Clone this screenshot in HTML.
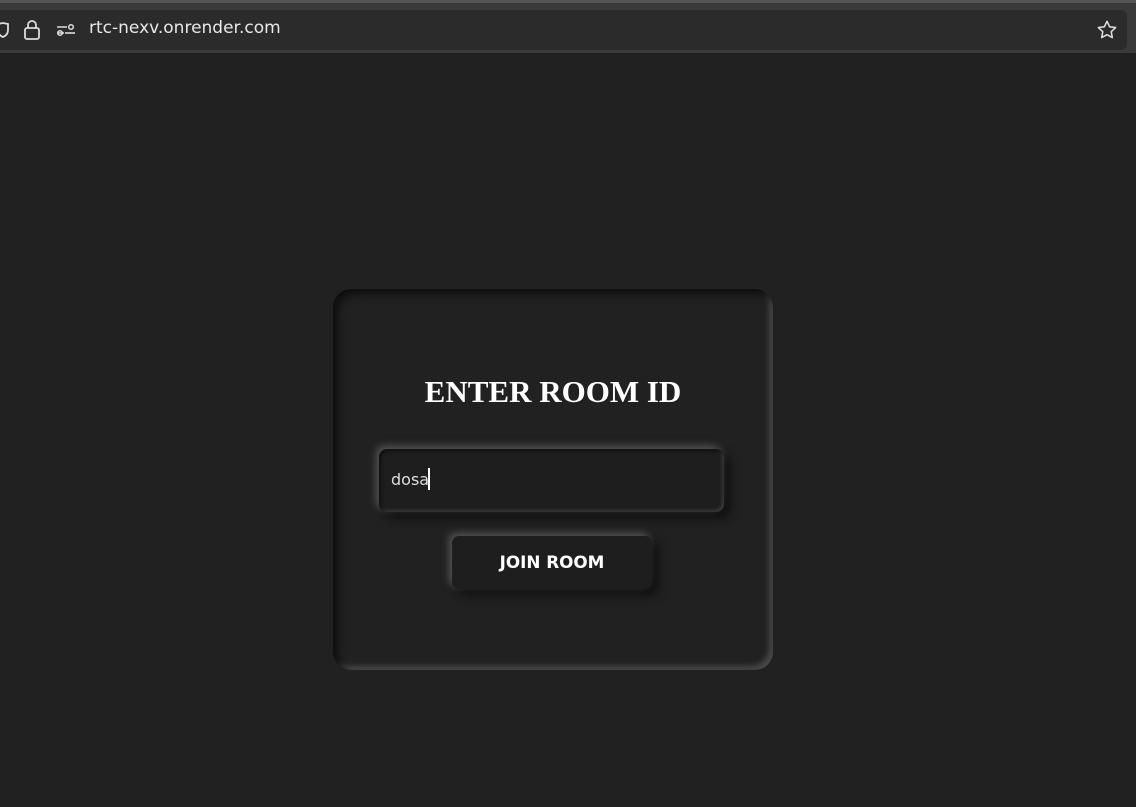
<!DOCTYPE html>
<html><head><meta charset="utf-8"><style>
*{margin:0;padding:0;box-sizing:border-box}
body{width:1136px;height:807px;background:#212121;overflow:hidden;font-family:"Liberation Sans",sans-serif;position:relative}
.top{position:absolute;left:0;top:0;width:1136px;height:53px;background:#3a3a3a;border-top:3px solid #555}
.url{position:absolute;left:-10px;top:7px;width:1137px;height:40px;background:#2b2b2b;border-radius:6px}
.url span{position:absolute;left:99px;top:8px;color:#e8e8e8;font-family:"DejaVu Sans","Liberation Sans",sans-serif;font-size:17px}
.card{position:absolute;left:333px;top:289px;width:440px;height:381px;border-radius:18px;background:#212121;
box-shadow:inset 5px 5px 8px #0e0e0e,inset -4px -4px 6px #4a4a4a}
h1{position:absolute;top:374px;text-align:center;color:#fff;font-family:"Liberation Serif","DejaVu Serif",serif;font-size:31px;font-weight:bold;letter-spacing:0}
.inp{position:absolute;left:379px;top:449px;width:345px;height:63px;border-radius:8px;background:#1e1e1e;
box-shadow:-3px -3px 8px #555,6px 6px 10px #0f0f0f,inset 2px 2px 3px #111,inset -2px -2px 3px #3a3a3a}
.inp span{position:absolute;left:12px;top:21px;color:#ddd;font-family:"DejaVu Sans",sans-serif;font-size:16px}
.inp i{position:absolute;left:49px;top:19px;width:1.5px;height:22px;background:#fff}
.btn{position:absolute;left:452px;top:536px;width:200px;height:53px;border-radius:7px;background:#1e1e1e;
box-shadow:-3px -3px 8px #555,6px 6px 10px #0f0f0f;color:#fff;text-align:center;line-height:53px;font-weight:bold;font-family:"DejaVu Sans",sans-serif;font-size:16.8px}
</style></head><body>
<div class="top"><div class="url">
<svg style="position:absolute;left:6px;top:12px" width="14" height="16" viewBox="0 0 14 16"><path d="M2 2 L7 1 L12 2 L12 8 Q12 13 7 15 Q2 13 2 8Z" fill="none" stroke="#ddd" stroke-width="1.8"/></svg>
<svg style="position:absolute;left:33px;top:9px" width="18" height="22" viewBox="0 0 18 22"><path d="M5 9 V6 a4 4 0 0 1 8 0 V9" fill="none" stroke="#ddd" stroke-width="1.8"/><rect x="2" y="9" width="14" height="11" rx="2" fill="none" stroke="#ddd" stroke-width="1.8"/></svg>
<svg style="position:absolute;left:66px;top:12px" width="20" height="16" viewBox="0 0 20 16"><path d="M1 5H11M2 11H8" stroke="#ddd" stroke-width="1.6" fill="none"/><circle cx="15" cy="5" r="2.3" fill="none" stroke="#ddd" stroke-width="1.5"/><circle cx="4" cy="11" r="2.3" fill="none" stroke="#ddd" stroke-width="1.5"/><path d="M9 11H19" stroke="#ddd" stroke-width="1.6"/></svg>
<span>rtc-nexv.onrender.com</span>
<svg style="position:absolute;left:1106px;top:9px" width="22" height="22" viewBox="0 0 24 24"><path d="M12 2.5l2.9 6 6.5.8-4.8 4.5 1.2 6.5L12 17.1l-5.8 3.2 1.2-6.5-4.8-4.5 6.5-.8z" fill="none" stroke="#ddd" stroke-width="1.7" stroke-linejoin="round"/></svg>
</div></div>
<div class="card"></div>
<h1 style="left:333px;width:440px">ENTER ROOM ID</h1>
<div class="inp"><span>dosa</span><i></i></div>
<div class="btn">JOIN ROOM</div>
</body></html>
